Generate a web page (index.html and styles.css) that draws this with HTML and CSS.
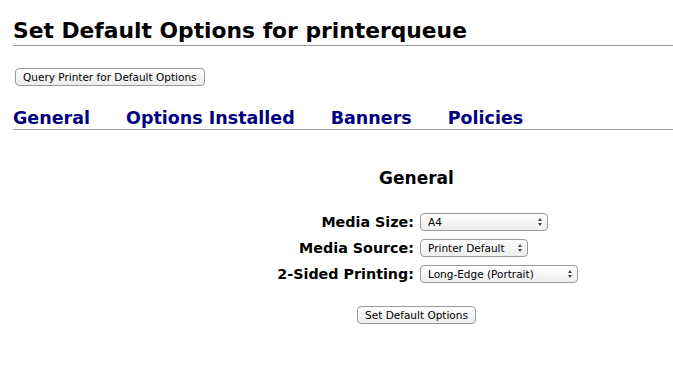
FILE: index.html
```html
<!DOCTYPE html>
<html lang="en">

<head>
  <meta charset="UTF-8" />
  <title>Set Default Options for printerqueue</title>
  <link rel="stylesheet" href="styles.css">
</head>

<body>
  <h2 class="title">Set Default Options for printerqueue</h2>

  <form class="query">
    <button type="button" class="btn">Query Printer for Default Options</button>
  </form>

  <div class="tabs">
    <a href="#general">General</a>
    <a href="#installed">Options Installed</a>
    <a href="#banners">Banners</a>
    <a href="#policies">Policies</a>
  </div>

  <form class="options">
    <h3>General</h3>
    <div class="rows">
      <label>Media Size:</label>
      <span class="select wide"><select><option>A4</option></select></span>
      <label>Media Source:</label>
      <span class="select"><select><option>Printer Default</option></select></span>
      <label>2-Sided Printing:</label>
      <span class="select widest"><select><option>Long-Edge (Portrait)</option></select></span>
    </div>
    <div class="submit">
      <button type="button" class="btn">Set Default Options</button>
    </div>
  </form>
</body>

</html>
```

FILE: styles.css
```css
body {
  margin: 0;
  padding-left: 13px;
  font-family: 'DejaVu Sans', sans-serif;
  color: black;
  background: white;
}

.title {
  margin: 0;
  padding-top: 17px;
  font-size: 21.8px;
  line-height: 28px;
  font-weight: bold;
  border-bottom: 1px solid #a0a0a0;
}

.query {
  display: flex;
  margin-top: 22px;
  padding-left: 2px;
}

.btn {
  font-family: 'DejaVu Sans', sans-serif;
  font-size: 10.5px;
  height: 18px;
  padding: 0 7px;
  border: 1px solid #9a9a9a;
  border-radius: 4px;
  background: linear-gradient(#ffffff, #ececec);
  color: black;
}

.tabs {
  display: flex;
  gap: 36px;
  margin-top: 12px;
  padding-top: 8px;
  height: 23px;
  border-bottom: 1px solid #a0a0a0;
}

.tabs a {
  color: #000080;
  text-decoration: none;
  font-weight: bold;
  font-size: 17.5px;
  line-height: 24px;
}

.options {
  margin-left: 147px;
  width: 513px;
}

.options h3 {
  margin: 38px 0 0;
  text-align: center;
  font-size: 17px;
  line-height: 20px;
}

.rows {
  display: grid;
  grid-template-columns: 254px auto;
  column-gap: 6px;
  row-gap: 8px;
  margin-top: 25px;
  align-items: center;
}

.rows label {
  text-align: right;
  font-weight: bold;
  font-size: 14.3px;
  line-height: 18px;
}

.select {
  position: relative;
  display: flex;
  width: 108px;
  justify-self: start;
}

.select.wide {
  width: 128px;
}

.select.widest {
  width: 158px;
}

.select select {
  appearance: none;
  width: 100%;
  height: 18px;
  padding: 0 0 0 7px;
  border: 1px solid #9a9a9a;
  border-radius: 4px;
  background: linear-gradient(#ffffff, #eeeeee);
  font-family: 'DejaVu Sans', sans-serif;
  font-size: 10.5px;
  color: black;
}

.select::before,
.select::after {
  content: "";
  position: absolute;
  right: 6px;
  border-left: 2.5px solid transparent;
  border-right: 2.5px solid transparent;
  pointer-events: none;
}

.select::before {
  top: 5px;
  border-bottom: 3px solid #444;
}

.select::after {
  top: 10px;
  border-top: 3px solid #444;
}

.submit {
  display: flex;
  justify-content: center;
  margin-top: 23px;
}
```
